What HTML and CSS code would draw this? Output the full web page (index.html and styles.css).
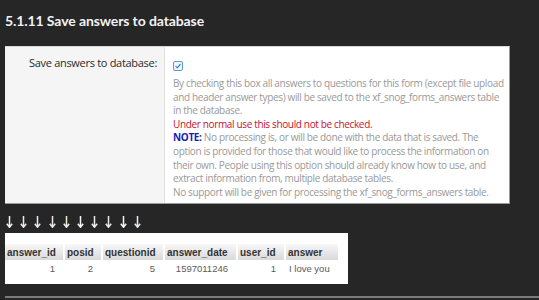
FILE: index.html
```html
<!DOCTYPE html>
<html>
<head>
    <title>Save answers to database</title>
    <link rel="stylesheet" href="styles.css">
</head>
<body>
    <div class="page">
        <h2 class="section-title">5.1.11 Save answers to database</h2>

        <div class="option-row">
            <div class="option-label">Save answers to database:</div>
            <div class="option-body">
                <span class="checkbox">
                    <svg width="10" height="10" viewBox="0 0 10 10">
                        <rect x="0.5" y="0.5" width="9" height="9" rx="1.5" fill="#eef5fc" stroke="#5b9bd5"/>
                        <path d="M2.6 5.2 L4.3 6.8 L7.5 3.2" fill="none" stroke="#2f6fb5" stroke-width="1.1"/>
                    </svg>
                </span>
                <div class="option-explain">
                    By checking this box all answers to questions for this form (except file upload<br>
                    and header answer types) will be saved to the xf_snog_forms_answers table<br>
                    in the database.<br>
                    <span class="warn">Under normal use this should not be checked.</span><br>
                    <b class="note">NOTE:</b> No processing is, or will be done with the data that is saved. The<br>
                    option is provided for those that would like to process the information on<br>
                    their own. People using this option should already know how to use, and<br>
                    extract information from, multiple database tables.<br>
                    No support will be given for processing the xf_snog_forms_answers table.
                </div>
            </div>
        </div>

        <div class="arrows">
            <svg class="a1" viewBox="0 0 7 12"><path d="M3.5 0 V11 M0.8 7.8 L3.5 11.2 L6.2 7.8"/></svg>
            <svg class="a2" viewBox="0 0 7 12"><path d="M3.5 0 V11 M0.8 7.8 L3.5 11.2 L6.2 7.8"/></svg>
            <svg class="a3" viewBox="0 0 7 12"><path d="M3.5 0 V11 M0.8 7.8 L3.5 11.2 L6.2 7.8"/></svg>
            <svg class="a2" viewBox="0 0 7 12"><path d="M3.5 0 V11 M0.8 7.8 L3.5 11.2 L6.2 7.8"/></svg>
            <svg class="a4" viewBox="0 0 7 12"><path d="M3.5 0 V11 M0.8 7.8 L3.5 11.2 L6.2 7.8"/></svg>
            <svg class="a1" viewBox="0 0 7 12"><path d="M3.5 0 V11 M0.8 7.8 L3.5 11.2 L6.2 7.8"/></svg>
            <svg class="a4" viewBox="0 0 7 12"><path d="M3.5 0 V11 M0.8 7.8 L3.5 11.2 L6.2 7.8"/></svg>
            <svg class="a2" viewBox="0 0 7 12"><path d="M3.5 0 V11 M0.8 7.8 L3.5 11.2 L6.2 7.8"/></svg>
            <svg class="a1" viewBox="0 0 7 12"><path d="M3.5 0 V11 M0.8 7.8 L3.5 11.2 L6.2 7.8"/></svg>
            <svg class="a3" viewBox="0 0 7 12"><path d="M3.5 0 V11 M0.8 7.8 L3.5 11.2 L6.2 7.8"/></svg>
        </div>

        <div class="result-box">
            <table class="result">
                <tr>
                    <th class="c1">answer_id</th>
                    <th class="c2">posid</th>
                    <th class="c3">questionid</th>
                    <th class="c4">answer_date</th>
                    <th class="c5">user_id</th>
                    <th class="c6">answer</th>
                </tr>
                <tr>
                    <td class="num">1</td>
                    <td class="num">2</td>
                    <td class="num">5</td>
                    <td class="num">1597011246</td>
                    <td class="num">1</td>
                    <td>I love you</td>
                </tr>
            </table>
        </div>

        <div class="bottom-line"></div>
    </div>
</body>
</html>
```

FILE: styles.css
```css
body {
    margin: 0;
    padding: 0;
    background-color: #262626;
    font-family: "Open Sans", sans-serif;
}

.page {
    padding: 0 0 0 5px;
    overflow: hidden;
    height: 300px;
}

.section-title {
    margin: 0;
    padding-top: 12px;
    height: 46px;
    box-sizing: border-box;
    font-family: Lato, "Open Sans", sans-serif;
    font-size: 14px;
    font-weight: bold;
    color: #f2f2f2;
    letter-spacing: -0.1px;
}

.option-row {
    display: grid;
    grid-template-columns: 160px 345px;
    width: 505px;
    height: 158px;
    box-sizing: border-box;
    border-top: 1px solid #d8d8d8;
    border-right: 1px solid #9a9a9a;
    border-bottom: 1px solid #9a9a9a;
    background-color: #fff;
}

.option-label {
    background-color: #f5f5f5;
    border-right: 1px solid #e2e2e2;
    text-align: right;
    padding: 8px 7px 0 0;
    font-size: 11px;
    color: #2b2b2b;
    letter-spacing: -0.3px;
}

.option-body {
    padding: 14px 0 0 8px;
}

.checkbox {
    display: block;
    height: 10px;
    line-height: 0;
}

.checkbox svg {
    display: block;
}

.option-explain {
    margin-top: 6px;
    font-size: 10px;
    line-height: 13.6px;
    color: #999;
    letter-spacing: -0.35px;
    white-space: nowrap;
}

.warn {
    color: #c8102e;
}

.note {
    color: #1a1ab8;
}

.arrows {
    display: flex;
    gap: 7.2px;
    height: 29px;
    padding: 12px 0 0 1px;
    box-sizing: border-box;
}

.arrows svg {
    width: 7px;
    height: 12px;
    fill: none;
    stroke-width: 1.5;
}

.a1 { stroke: #f4f4f4; }
.a2 { stroke: #f1e3ea; }
.a3 { stroke: #dbeef5; }
.a4 { stroke: #e4f3de; }

.result-box {
    width: 343px;
    height: 51px;
    background-color: #fff;
    padding-top: 11px;
    box-sizing: border-box;
}

.result {
    table-layout: fixed;
    border-collapse: separate;
    border-spacing: 2px 0;
    margin-left: -2px;
    font-family: "Liberation Sans", Arial, sans-serif;
    font-size: 10px;
    white-space: nowrap;
}

.result th {
    height: 16px;
    padding: 0 2px;
    text-align: left;
    font-weight: bold;
    color: #333;
    background: linear-gradient(#f8f8f8, #d9d9d9);
}

.result td {
    height: 17px;
    padding: 0 8px 0 3px;
    font-size: 9.5px;
    color: #5a5a5a;
}

.result td.num {
    text-align: right;
}

.c1 { width: 54px; }
.c2 { width: 32px; }
.c3 { width: 56px; }
.c4 { width: 67px; }
.c5 { width: 42px; }
.c6 { width: 42px; }

.bottom-line {
    margin-top: 12px;
    height: 2px;
    background-color: #7a7a7a;
}
```
